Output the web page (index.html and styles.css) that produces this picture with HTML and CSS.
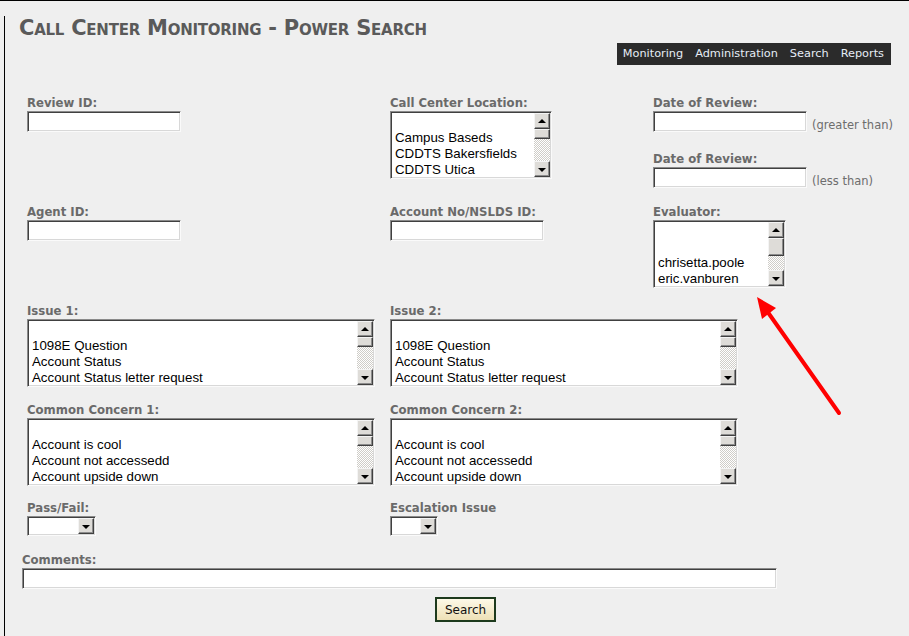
FILE: index.html
```html
<!DOCTYPE html>
<html>
<head>
<meta charset="utf-8">
<title>Call Center Monitoring - Power Search</title>
<link rel="stylesheet" href="styles.css">
</head>
<body>
<div class="page">
  <div class="frame">
    <h1 class="title">Call Center Monitoring - Power Search</h1>
    <div class="navrow">
      <nav class="nav"><a>Monitoring</a><a>Administration</a><a>Search</a><a>Reports</a></nav>
    </div>

    <div class="form">
      <div class="row row-a">
        <div class="col c1">
          <div class="lbl">Review ID:</div>
          <input class="txt w154" type="text">
        </div>
        <div class="col c2">
          <div class="lbl">Call Center Location:</div>
          <div class="listbox w162">
            <ul class="opts"><li></li><li>Campus Baseds</li><li>CDDTS Bakersfields</li><li>CDDTS Utica</li></ul>
            <div class="sb"><span class="sb-btn up"></span><span class="sb-thumb"></span><span class="sb-track"></span><span class="sb-btn down"></span></div>
          </div>
        </div>
        <div class="col c3">
          <div class="lbl">Date of Review:</div>
          <div class="inline"><input class="txt w154" type="text"><span class="hint">(greater than)</span></div>
          <div class="lbl gap20">Date of Review:</div>
          <div class="inline"><input class="txt w154" type="text"><span class="hint">(less than)</span></div>
        </div>
      </div>

      <div class="row row-b">
        <div class="col c1">
          <div class="lbl">Agent ID:</div>
          <input class="txt w154" type="text">
        </div>
        <div class="col c2">
          <div class="lbl">Account No/NSLDS ID:</div>
          <input class="txt w154" type="text">
        </div>
        <div class="col c3">
          <div class="lbl">Evaluator:</div>
          <div class="listbox w133">
            <ul class="opts"><li></li><li></li><li>chrisetta.poole</li><li>eric.vanburen</li></ul>
            <div class="sb"><span class="sb-btn up"></span><span class="sb-thumb big"></span><span class="sb-track"></span><span class="sb-btn down"></span></div>
          </div>
        </div>
      </div>

      <div class="row row-c">
        <div class="col c1">
          <div class="lbl">Issue 1:</div>
          <div class="listbox w348">
            <ul class="opts"><li></li><li>1098E Question</li><li>Account Status</li><li>Account Status letter request</li></ul>
            <div class="sb"><span class="sb-btn up"></span><span class="sb-thumb"></span><span class="sb-track"></span><span class="sb-btn down"></span></div>
          </div>
        </div>
        <div class="col c2w">
          <div class="lbl">Issue 2:</div>
          <div class="listbox w348">
            <ul class="opts"><li></li><li>1098E Question</li><li>Account Status</li><li>Account Status letter request</li></ul>
            <div class="sb"><span class="sb-btn up"></span><span class="sb-thumb"></span><span class="sb-track"></span><span class="sb-btn down"></span></div>
          </div>
        </div>
      </div>

      <div class="row row-d">
        <div class="col c1">
          <div class="lbl">Common Concern 1:</div>
          <div class="listbox w348">
            <ul class="opts"><li></li><li>Account is cool</li><li>Account not accessedd</li><li>Account upside down</li></ul>
            <div class="sb"><span class="sb-btn up"></span><span class="sb-thumb"></span><span class="sb-track"></span><span class="sb-btn down"></span></div>
          </div>
        </div>
        <div class="col c2w">
          <div class="lbl">Common Concern 2:</div>
          <div class="listbox w348">
            <ul class="opts"><li></li><li>Account is cool</li><li>Account not accessedd</li><li>Account upside down</li></ul>
            <div class="sb"><span class="sb-btn up"></span><span class="sb-thumb"></span><span class="sb-track"></span><span class="sb-btn down"></span></div>
          </div>
        </div>
      </div>

      <div class="row row-e">
        <div class="col c1">
          <div class="lbl">Pass/Fail:</div>
          <div class="select w69"><span class="sel-val"></span><span class="sb-btn down"></span></div>
        </div>
        <div class="col c2w">
          <div class="lbl">Escalation Issue</div>
          <div class="select w48"><span class="sel-val"></span><span class="sb-btn down"></span></div>
        </div>
      </div>

      <div class="row-f">
        <div class="lbl">Comments:</div>
        <input class="txt w755" type="text">
      </div>

      <div class="row-g">
        <button class="btn" type="button">Search</button>
      </div>
    </div>
  </div>

  <svg class="annot" width="909" height="636" viewBox="0 0 909 636" aria-hidden="true">
    <line x1="839" y1="413" x2="767" y2="311" stroke="#ff0000" stroke-width="4" stroke-linecap="round"/>
    <polygon points="757,297 776,308 762,319" fill="#ff0000"/>
  </svg>
</div>
</body>
</html>
```

FILE: styles.css
```css
html, body {
  margin: 0;
  padding: 0;
  background: #efefef;
}

.page {
  position: relative;
  width: 909px;
  height: 636px;
  overflow: hidden;
  border-top: 1px solid #000;
  box-sizing: border-box;
}

.frame {
  margin-left: 4px;
  border-left: 1px solid #000;
  height: 100%;
  font-family: "DejaVu Sans", Verdana, sans-serif;
}

.title {
  margin: 15px 0 0 14px;
  font-size: 21px;
  line-height: 24px;
  font-weight: bold;
  font-variant: small-caps;
  color: #5a5a5a;
  letter-spacing: -0.25px;
}

.navrow {
  display: flex;
  justify-content: flex-end;
  padding-right: 18px;
  margin-top: 3px;
}

.nav {
  display: flex;
  gap: 12px;
  height: 22px;
  align-items: center;
  padding: 0 7px 0 6px;
  background: #2b2b2b;
}

.nav a {
  color: #e6edf6;
  font-size: 11.3px;
  line-height: 22px;
  text-decoration: none;
}

.form {
  padding-left: 22px;
}

.row {
  display: flex;
}

.row-a { margin-top: 31px; }
.row-b { margin-top: 17px; }
.row-c { margin-top: 16px; }
.row-d { margin-top: 16px; }
.row-e { margin-top: 15px; }

.col { display: flex; flex-direction: column; align-items: flex-start; }
.c1 { width: 363px; }
.c2 { width: 263px; }
.c2w { width: 363px; }
.c3 { flex: 1; }

.lbl {
  font-size: 11.7px;
  line-height: 14px;
  height: 14px;
  font-weight: bold;
  color: #6a6a6a;
  margin-bottom: 1px;
  white-space: nowrap;
}

.gap20 { margin-top: 20px; }

.txt {
  -webkit-appearance: none;
  appearance: none;
  box-sizing: border-box;
  height: 21px;
  margin: 0;
  padding: 0;
  background: #fff;
  border: 1px solid;
  border-color: #8a8a8a #fafafa #fafafa #8a8a8a;
  box-shadow: inset 1px 1px 0 #404040, inset -1px -1px 0 #d8d8d8;
  outline: none;
}

.w154 { width: 154px; }
.w755 { width: 755px; }
.w162 { width: 162px; }
.w133 { width: 133px; }
.w348 { width: 348px; }
.w69 { width: 69px; }
.w48 { width: 48px; }

.inline {
  display: flex;
  align-items: flex-end;
}

.hint {
  margin-left: 5px;
  margin-bottom: 0;
  font-size: 11.5px;
  line-height: 14px;
  color: #6d6d6d;
  white-space: nowrap;
}

.listbox {
  box-sizing: border-box;
  height: 68px;
  display: flex;
  padding: 1px;
  background: #fff;
  border: 1px solid;
  border-color: #8a8a8a #fafafa #fafafa #8a8a8a;
  box-shadow: inset 1px 1px 0 #404040, inset -1px -1px 0 #d8d8d8;
}

.opts {
  flex: 1;
  margin: 0;
  padding: 1px 0 0 3px;
  list-style: none;
  overflow: hidden;
  font-family: "Liberation Sans", Arial, sans-serif;
  font-size: 13.3px;
  line-height: 16px;
  color: #000;
}

.opts li {
  height: 16px;
  white-space: nowrap;
}

.sb {
  width: 16px;
  display: flex;
  flex-direction: column;
}

.sb-btn {
  box-sizing: border-box;
  width: 16px;
  height: 16px;
  flex: none;
  display: flex;
  align-items: center;
  justify-content: center;
  background: #dedcd8;
  border: 1px solid;
  border-color: #f4f4f4 #404040 #404040 #f4f4f4;
  box-shadow: inset -1px -1px 0 #8c8c8c;
}

.sb-btn::after {
  content: "";
  width: 0;
  height: 0;
  border-left: 4px solid transparent;
  border-right: 4px solid transparent;
}

.sb-btn.up::after {
  border-bottom: 4px solid #000;
  margin-top: -1px;
}

.sb-btn.down::after {
  border-top: 4px solid #000;
  margin-top: 1px;
}

.sb-thumb {
  box-sizing: border-box;
  height: 10px;
  flex: none;
  background: #dedcd8;
  border: 1px solid;
  border-color: #f4f4f4 #404040 #404040 #f4f4f4;
  box-shadow: inset -1px -1px 0 #8c8c8c;
}

.sb-thumb.big { height: 18px; }

.sb-track {
  flex: 1;
  background: repeating-conic-gradient(#ffffff 0 25%, #cfcdc8 0 50%) 0 0 / 2px 2px;
}

.select {
  box-sizing: border-box;
  height: 20px;
  display: flex;
  padding: 1px;
  background: #fff;
  border: 1px solid;
  border-color: #8a8a8a #fafafa #fafafa #8a8a8a;
  box-shadow: inset 1px 1px 0 #404040, inset -1px -1px 0 #d8d8d8;
}

.sel-val { flex: 1; }

.select .sb-btn { height: 16px; }

.row-f {
  margin-top: 17px;
  margin-left: -5px;
}

.row-g {
  display: flex;
  padding-left: 408px;
  margin-top: 8px;
}

.btn {
  box-sizing: border-box;
  width: 61px;
  height: 25px;
  margin: 0;
  padding: 0;
  font-family: "DejaVu Sans", Verdana, sans-serif;
  font-size: 12px;
  color: #111;
  background: linear-gradient(#fdf9e8, #ede0b6);
  border: 2px solid #1d3a1d;
  border-radius: 0;
}

.annot {
  position: absolute;
  left: 0;
  top: -1px;
  pointer-events: none;
}
```
